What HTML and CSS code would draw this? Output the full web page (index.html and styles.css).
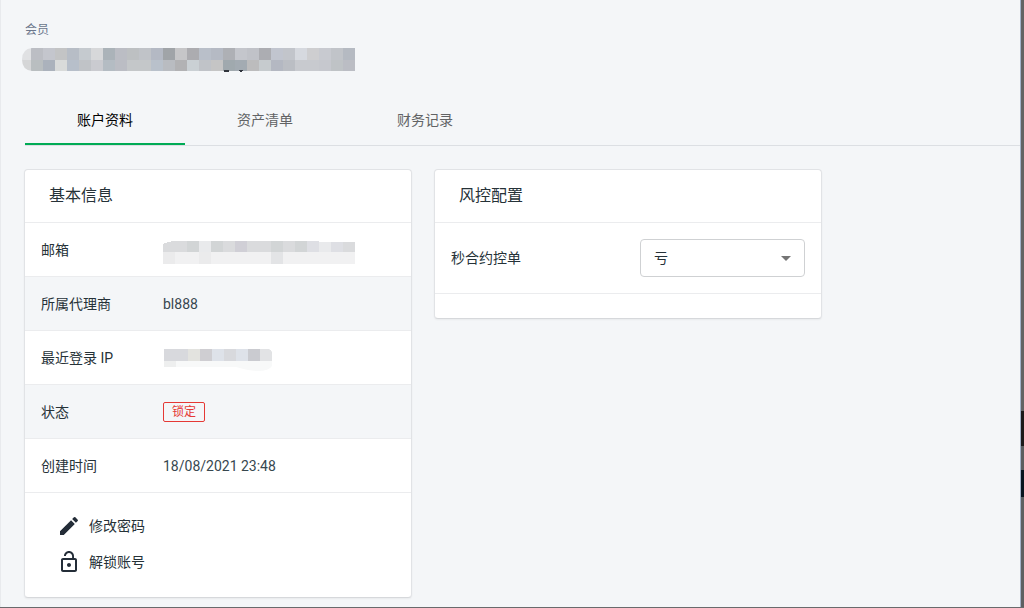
FILE: index.html
```html
<!DOCTYPE html>
<html lang="zh-CN">
<head>
<meta charset="utf-8">
<meta name="viewport" content="width=device-width, initial-scale=1">
<title>会员</title>
<link rel="stylesheet" href="styles.css">
</head>
<body>
<div class="shell">
  <main class="page">
    <header class="page-header">
      <p class="overline">会员</p>
      <svg class="masked-title" width="336" height="24" viewBox="0 0 336 24" shape-rendering="crispEdges" role="img" aria-label="***">
        <clipPath id="title-clip"><path d="M10 0H333V23H10Q0 22 0 11.500Q0 1 10 0Z"/></clipPath>
        <g clip-path="url(#title-clip)">
          <path fill="#e0e1e3" d="M0 0h9v12H0z"/>
          <path fill="#bcbec4" d="M9 0h12v12H9z"/>
          <path fill="#c4c6cd" d="M21 0h12v12H21z"/>
          <path fill="#c3c4c5" d="M33 0h12v12H33z"/>
          <path fill="#b7bdc6" d="M45 0h12v12H45z"/>
          <path fill="#c5cacf" d="M57 0h12v12H57z"/>
          <path fill="#d7d8da" d="M69 0h12v12H69z"/>
          <path fill="#abb3b9" d="M81 0h12v12H81z"/>
          <path fill="#bbbdc4" d="M93 0h12v12H93z"/>
          <path fill="#bdc0c2" d="M105 0h12v12h-12z"/>
          <path fill="#c0c3c8" d="M117 0h12v12h-12z"/>
          <path fill="#b4b9c4" d="M129 0h12v12h-12z"/>
          <path fill="#a0a4a8" d="M141 0h12v12h-12z"/>
          <path fill="#c6c6c8" d="M153 0h12v12h-12z"/>
          <path fill="#acacb0" d="M165 0h12v12h-12z"/>
          <path fill="#b9bfc9" d="M177 0h12v12h-12z"/>
          <path fill="#b5bac4" d="M189 0h12v12h-12z"/>
          <path fill="#aeb0b5" d="M201 0h12v12h-12z"/>
          <path fill="#c4c6cc" d="M213 0h12v12h-12z"/>
          <path fill="#c0c2c8" d="M225 0h12v12h-12z"/>
          <path fill="#acadb2" d="M237 0h12v12h-12z"/>
          <path fill="#c1c5cf" d="M249 0h12v12h-12z"/>
          <path fill="#c2c5cb" d="M261 0h12v12h-12z"/>
          <path fill="#d6d9df" d="M273 0h12v12h-12z"/>
          <path fill="#ceced0" d="M285 0h12v12h-12z"/>
          <path fill="#c8cad0" d="M297 0h12v12h-12z"/>
          <path fill="#c1c4c9" d="M309 0h12v12h-12z"/>
          <path fill="#b5bac2" d="M321 0h12v12h-12z"/>
          <path fill="#d5d6d7" d="M0 12h9v11H0z"/>
          <path fill="#b9bec0" d="M9 12h12v11H9z"/>
          <path fill="#abb2bc" d="M21 12h12v11H21z"/>
          <path fill="#d9dbda" d="M33 12h12v11H33z"/>
          <path fill="#b7bfca" d="M45 12h12v11H45z"/>
          <path fill="#c0c3c7" d="M57 12h12v11H57z"/>
          <path fill="#cacbd0" d="M69 12h12v11H69z"/>
          <path fill="#b4bcc3" d="M81 12h12v11H81z"/>
          <path fill="#bbbdc4" d="M93 12h12v11H93z"/>
          <path fill="#c4c7c9" d="M105 12h24v11h-24z"/>
          <path fill="#b9c1cb" d="M129 12h12v11h-12z"/>
          <path fill="#b9bcc1" d="M141 12h12v11h-12z"/>
          <path fill="#b2b2b4" d="M153 12h12v11h-12z"/>
          <path fill="#cad0d4" d="M165 12h12v11h-12z"/>
          <path fill="#c0c3c8" d="M177 12h12v11h-12z"/>
          <path fill="#c5c5c5" d="M189 12h12v11h-12z"/>
          <path fill="#a0a9ae" d="M201 12h12v11h-12z"/>
          <path fill="#a3abb2" d="M213 12h12v11h-12z"/>
          <path fill="#bcbcbd" d="M225 12h12v11h-12z"/>
          <path fill="#c6cbce" d="M237 12h12v11h-12z"/>
          <path fill="#b4b8c2" d="M249 12h12v11h-12z"/>
          <path fill="#bbbec4" d="M261 12h12v11h-12z"/>
          <path fill="#c8cacf" d="M273 12h24v11h-24z"/>
          <path fill="#c6c8ce" d="M297 12h12v11h-12z"/>
          <path fill="#bfc3c6" d="M309 12h12v11h-12z"/>
          <path fill="#bbbdc4" d="M321 12h12v11h-12z"/>
        </g>
        <path fill="#30343c" d="M202 22h5v1h1v0h-1v1h-5zM217 22h4v1h-1v1h-2v-1h-1z"/>
      </svg>
    </header>

    <nav class="tabs" aria-label="会员">
      <a class="tab tab-active" href="#profile" aria-current="page">账户资料</a>
      <a class="tab" href="#assets">资产清单</a>
      <a class="tab" href="#finance">财务记录</a>
    </nav>

    <div class="cards">
      <section class="card" id="profile">
        <h2 class="card-title">基本信息</h2>
        <table class="info">
          <tbody>
            <tr>
              <th scope="row">邮箱</th>
              <td>
                <svg class="masked" width="192" height="24" viewBox="0 0 192 24" shape-rendering="crispEdges" role="img" aria-label="***">
                  <path fill="#dadbdd" d="M0 4Q5 1 15 1H150Q153 2 192 2V12H0z"/>
                  <path fill="#d2d5d6" d="M24 1h12v11H24zM48 1h12v11H48zM108 1h12v11h-12zM132 1h12v11h-12z"/>
                  <path fill="#e9eaec" d="M36 1h12v11H36zM156 2h12v10h-12z"/>
                  <path fill="#d0cfd6" d="M72 1h12v11H72z"/>
                  <path fill="#dedfe4" d="M144 1h12v11h-12zM168 2h12v10h-12z"/>
                  <path fill="#f1f1f2" d="M0 12h192v12H0z"/>
                  <path fill="#ebebec" d="M0 12h12v12H0zM36 12h12v12H36z"/>
                  <path fill="#e3e4e6" d="M108 12h12v12h-12z"/>
                </svg>
              </td>
            </tr>
            <tr>
              <th scope="row">所属代理商</th>
              <td>bl888</td>
            </tr>
            <tr>
              <th scope="row">最近登录 IP</th>
              <td>
                <svg class="masked" width="109" height="24" viewBox="0 0 109 24" role="img" aria-label="***">
                  <path fill="#d8d9dd" d="M1 1H105Q109 2 109 6V13H1z"/>
                  <path fill="#e3e3df" d="M25 1h12v12H25z"/>
                  <path fill="#cfced2" d="M37 1h12v12H37z"/>
                  <path fill="#dee2e9" d="M49 1h12v12H49zM73 1h12v12H73z"/>
                  <path fill="#cacbd0" d="M85 1h12v12H85z"/>
                  <path fill="#e2e3e5" d="M97 1h8q4 1 4 5v7H97z"/>
                  <path fill="#f8f9f9" d="M1 13H109V18Q106 23 95 23Q86 23 73 19H1z"/>
                  <path fill="#eeefef" d="M1 13h12v6H1z"/>
                </svg>
              </td>
            </tr>
            <tr>
              <th scope="row">状态</th>
              <td><span class="badge">锁定</span></td>
            </tr>
            <tr>
              <th scope="row">创建时间</th>
              <td>18/08/2021 23:48</td>
            </tr>
          </tbody>
        </table>
        <div class="actions">
          <button class="action" type="button">
            <svg class="icon" viewBox="0 0 24 24" aria-hidden="true"><path d="M3 17.250V21h3.750L17.810 9.940l-3.750-3.750L3 17.250zM20.710 7.040c.39-.39.39-1.020 0-1.410l-2.340-2.340a.9959.9959 0 0 0-1.410 0l-1.830 1.830 3.750 3.750 1.830-1.830z"/></svg>
            修改密码
          </button>
          <button class="action" type="button">
            <svg class="icon" viewBox="0 0 24 24" aria-hidden="true"><path d="M12 17c1.100 0 2-.9 2-2s-.9-2-2-2-2 .9-2 2 .9 2 2 2zm6-9h-1V6c0-2.760-2.240-5-5-5S7 3.240 7 6h1.900c0-1.710 1.390-3.100 3.100-3.100 1.710 0 3.100 1.390 3.100 3.100v2H6c-1.100 0-2 .9-2 2v10c0 1.100.9 2 2 2h12c1.100 0 2-.9 2-2V10c0-1.100-.9-2-2-2zm0 12H6V10h12v10z"/></svg>
            解锁账号
          </button>
        </div>
      </section>

      <section class="card">
        <h2 class="card-title">风控配置</h2>
        <div class="setting">
          <label class="setting-label" for="risk">秒合约控单</label>
          <div class="select-wrap">
            <select class="select" id="risk">
              <option>亏</option>
            </select>
            <svg class="arrow" viewBox="0 0 24 24" aria-hidden="true"><path d="M7 10l5 5 5-5z"/></svg>
          </div>
        </div>
        <div class="card-footer"></div>
      </section>
    </div>
  </main>
  <div class="edge"></div>
</div>
</body>
</html>
```

FILE: styles.css
```css
* {
  box-sizing: border-box;
}

body {
  margin: 0;
  background: #f4f6f8;
  color: #263238;
  font: 14px/20px Roboto, "Noto Sans CJK SC", sans-serif;
}

.shell {
  display: flex;
  min-height: 100vh;
  border-bottom: 1px solid #696a6c;
}

.page {
  flex: 1;
  min-width: 0;
  padding: 20px 0 9px 24px;
  border-left: 1px solid #e8eaed;
}

.edge {
  width: 4px;
  border-left: 1px solid #a3b2c9;
  background: linear-gradient(
    #636363 411px,
    #1c1a1a 411px 446px,
    #5c5e60 446px 470px,
    #07141f 470px 497px,
    #5d6062 497px
  );
}

.overline {
  margin: 0;
  color: #6b778c;
  font-size: 12px;
}

.page-header {
  display: flex;
  flex-direction: column;
}

.masked-title {
  margin: 8px 0 0 -3px;
}

.tabs {
  display: flex;
  margin-top: 24px;
  border-bottom: 1px solid #dcdfe3;
}

.tab {
  width: 160px;
  height: 49px;
  padding-top: 14px;
  color: #616365;
  text-align: center;
  text-decoration: none;
}

.tab-active {
  border-bottom: 2px solid #00ab55;
  color: #000;
}

.cards {
  display: grid;
  grid-template-columns: repeat(2, minmax(0, 388px));
  gap: 22px;
  align-items: start;
  margin: 23px 0 0 -1px;
}

.card {
  overflow: hidden;
  border: 1px solid #e1e3e6;
  border-bottom-color: #d6d8db;
  border-radius: 4px;
  background: #fff;
  box-shadow: 0 1px 2px #0000000d;
}

.card-title {
  margin: 0;
  padding: 14px 24px;
  border-bottom: 1px solid #ebecee;
  font-size: 16px;
  font-weight: 400;
  line-height: 24px;
}

.info {
  width: 100%;
  border-spacing: 0;
}

.info th,
.info td {
  height: 54px;
  padding: 0 16px;
  border-bottom: 1px solid #ebecee;
  font-weight: 400;
  text-align: left;
}

.info th {
  width: 122px;
  padding-right: 0;
  white-space: nowrap;
}

.info tr:nth-child(even) {
  background: #f4f6f8;
}

.info td {
  color: #37474f;
}

.masked {
  display: block;
  margin-top: 4px;
}

.badge {
  display: inline-block;
  padding: 0 8px;
  border: 1px solid #e53935;
  border-radius: 2px;
  color: #e53935;
  font-size: 12px;
  line-height: 18px;
}

.actions {
  display: flex;
  flex-direction: column;
  align-items: flex-start;
  padding: 15px 32px 17px;
}

.action {
  display: flex;
  align-items: center;
  gap: 8px;
  height: 36px;
  padding: 0;
  border: 0;
  background: none;
  color: #263238;
  font: inherit;
}

.icon {
  width: 24px;
  height: 24px;
  fill: #242d38;
}

.setting {
  display: flex;
  align-items: center;
  justify-content: space-between;
  padding: 16px;
  border-bottom: 1px solid #ebecee;
}

.select-wrap {
  position: relative;
  width: 165px;
}

.select {
  width: 100%;
  height: 38px;
  padding: 0 32px 0 13px;
  border: 1px solid #cfd1d3;
  border-radius: 4px;
  appearance: none;
  background: #fff;
  color: #263238;
  font: inherit;
}

.arrow {
  position: absolute;
  top: 7px;
  right: 7px;
  width: 24px;
  height: 24px;
  fill: #757575;
  pointer-events: none;
}

.card-footer {
  height: 24px;
}
```
